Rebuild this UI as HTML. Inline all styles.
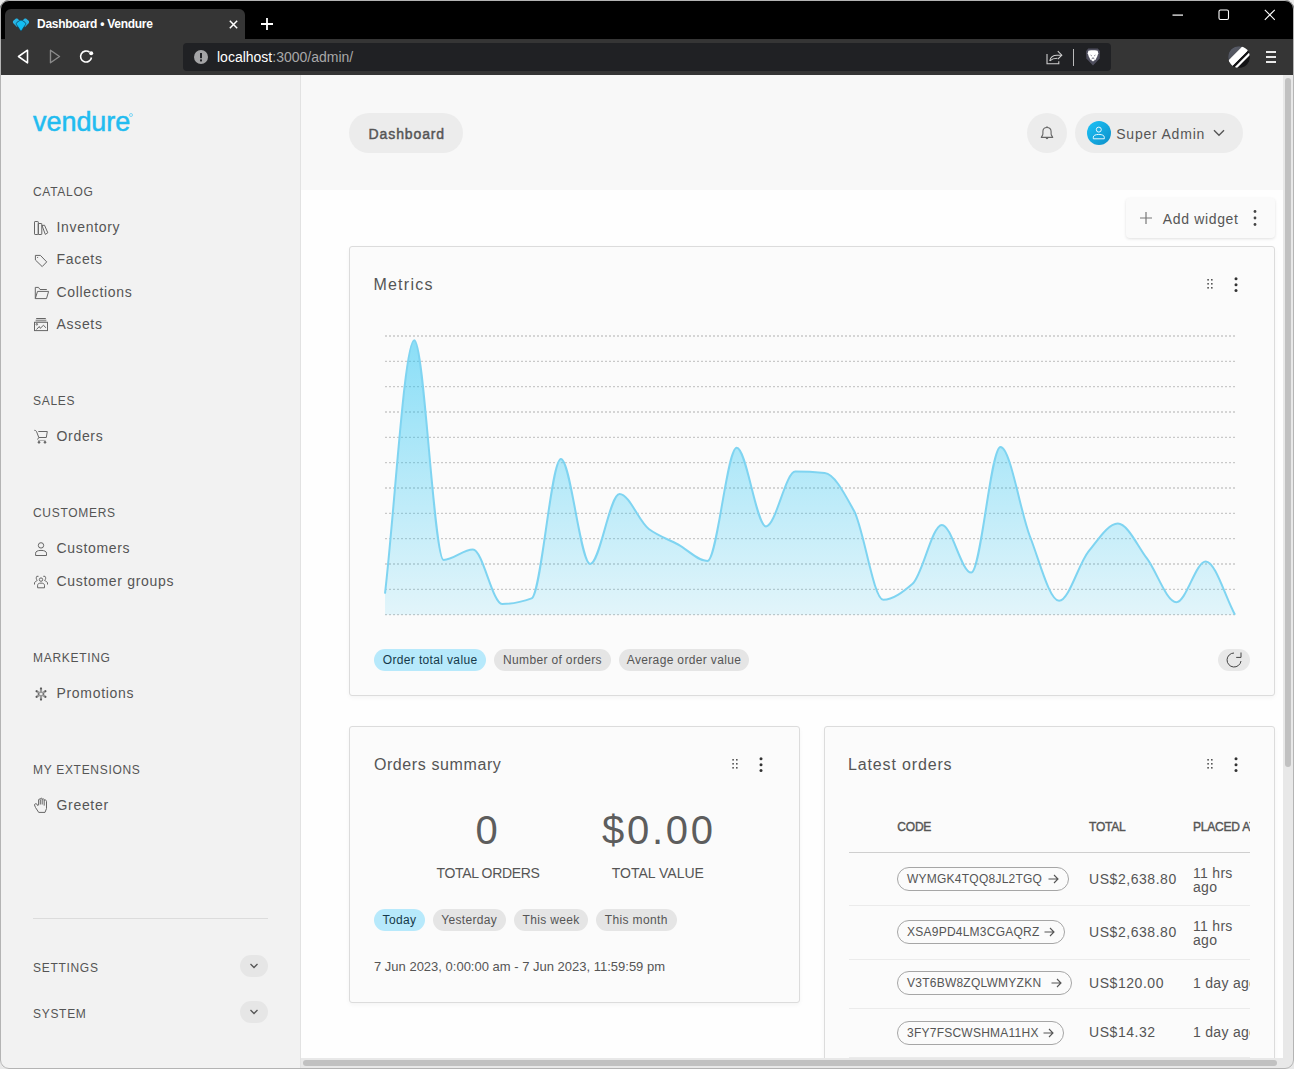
<!DOCTYPE html>
<html><head><meta charset="utf-8">
<style>
*{box-sizing:border-box;margin:0;padding:0}
html,body{width:1294px;height:1069px;overflow:hidden;background:#e9e9e9;font-family:"Liberation Sans",sans-serif}
.abs{position:absolute}
.t{position:absolute;white-space:nowrap}
#win{position:absolute;left:0;top:0;width:1294px;height:1069px;border-radius:9px;overflow:hidden;background:#fefefe}
#frame{position:absolute;left:0;top:0;width:1294px;height:1069px;border-radius:9px;border:1px solid #b4b4b4;pointer-events:none}
.sec{position:absolute;left:33px;font-size:12px;letter-spacing:0.7px;color:#555;white-space:nowrap}
.item{position:absolute;left:56.5px;font-size:14px;letter-spacing:0.68px;color:#555;white-space:nowrap}
.ico{position:absolute;left:33px}
.card{position:absolute;background:#fbfbfb;border:1px solid #dcdcdc;border-radius:3px}
.title{position:absolute;font-size:16px;letter-spacing:0.5px;color:#555;white-space:nowrap}
.chip{position:absolute;height:22px;border-radius:11px;background:#e5e5e5;font-size:12px;letter-spacing:0.35px;color:#555;line-height:22px;text-align:center;white-space:nowrap}
.pill{position:absolute;left:48px;height:24px;border:1px solid #a6a6a6;border-radius:12px;font-size:12px;letter-spacing:0.24px;color:#555;line-height:22px;padding-left:9px;white-space:nowrap}
.num{position:absolute;font-size:14px;letter-spacing:0.3px;color:#555;white-space:nowrap}
.th{position:absolute;font-size:12px;letter-spacing:-0.2px;color:#555;-webkit-text-stroke:0.4px #555;white-space:nowrap}
</style></head><body>
<div id="win">
<!-- browser chrome -->
<div class="abs" style="left:0;top:0;width:1294px;height:39px;background:#000"></div>
<div class="abs" style="left:5px;top:9px;width:240px;height:30px;background:#353535;border-radius:6px 6px 0 0"></div>
<svg class="abs" style="left:12px;top:17.5px" width="18" height="14" viewBox="0 0 18 14">
  <path d="M1.3,5.2 C0.6,4.4 0.8,3.2 1.6,2.5 L3.4,1 C4.1,0.4 5.2,0.4 5.9,1 L8,3 L5.2,9.2 Z" fill="#29b4e4"/>
  <path d="M16.7,5.2 C17.4,4.4 17.2,3.2 16.4,2.5 L14.6,1 C13.9,0.4 12.8,0.4 12.1,1 L10,3 L12.8,9.2 Z" fill="#29b4e4"/>
  <path d="M4.6,6.8 C4,6 4.2,5 5,4.3 L7.6,2.6 C8.4,2 9.6,2 10.4,2.6 L13,4.3 C13.8,5 14,6 13.4,6.8 L9.6,12.6 C9.3,13.1 8.7,13.1 8.4,12.6 Z" fill="#12bdf2" stroke="#0f4660" stroke-width="0.8"/>
</svg>
<div class="t" style="left:37px;top:16.5px;font-size:12px;letter-spacing:-0.28px;font-weight:bold;color:#fff">Dashboard • Vendure</div>
<svg class="abs" style="left:228.5px;top:19.5px" width="9" height="9" viewBox="0 0 9 9"><path d="M0.8,0.8 L8.2,8.2 M8.2,0.8 L0.8,8.2" stroke="#fff" stroke-width="1.5"/></svg>
<svg class="abs" style="left:260px;top:17px" width="14" height="14" viewBox="0 0 14 14"><path d="M7,1 V13 M1,7 H13" stroke="#fff" stroke-width="1.8"/></svg>
<svg class="abs" style="left:1172px;top:14px" width="12" height="3"><rect x="0.5" y="0.5" width="10.5" height="1.2" fill="#fff"/></svg>
<svg class="abs" style="left:1218px;top:9px" width="12" height="12"><rect x="1" y="1" width="9.5" height="9.5" rx="1.5" fill="none" stroke="#fff" stroke-width="1.1"/></svg>
<svg class="abs" style="left:1264px;top:9px" width="12" height="12"><path d="M0.8,0.8 L10.8,10.8 M10.8,0.8 L0.8,10.8" stroke="#fff" stroke-width="1.1"/></svg>
<div class="abs" style="left:0;top:39px;width:1294px;height:36px;background:#353535"></div>
<svg class="abs" style="left:17px;top:49px" width="12" height="15" viewBox="0 0 12 15"><path d="M10.5,1.2 L1.5,7.5 L10.5,13.8 Z" fill="none" stroke="#fff" stroke-width="1.6" stroke-linejoin="round"/></svg>
<svg class="abs" style="left:49px;top:49px" width="12" height="15" viewBox="0 0 12 15"><path d="M1.5,1.2 L10.5,7.5 L1.5,13.8 Z" fill="none" stroke="#8a8a8a" stroke-width="1.4" stroke-linejoin="round"/></svg>
<svg class="abs" style="left:79px;top:49px" width="16" height="16" viewBox="0 0 16 16"><path d="M12.5,8.5 A5.5,5.5 0 1 1 10.5,3.2" fill="none" stroke="#fff" stroke-width="1.6"/><circle cx="12.2" cy="4.2" r="2" fill="#fff"/></svg>
<div class="abs" style="left:183px;top:43px;width:928px;height:28px;background:#202124;border-radius:4px"></div>
<svg class="abs" style="left:194px;top:50px" width="14" height="14" viewBox="0 0 14 14"><circle cx="7" cy="7" r="7" fill="#a4a4a6"/><rect x="6" y="3" width="2" height="5.2" fill="#212226"/><rect x="6" y="9.4" width="2" height="2" fill="#212226"/></svg>
<div class="t" style="left:217px;top:49px;font-size:14px;color:#fff">localhost<span style="color:#a8a8a8">:3000/admin/</span></div>
<svg class="abs" style="left:1045px;top:49px" width="20" height="17" viewBox="0 0 20 17" fill="none" stroke="#cfcfcf" stroke-width="1.1"><path d="M2,4.9 V14.8 H13.8 V12.3"/><path d="M4.8,11.8 C5.5,8.5 8,6.3 12,6.3 H16.5"/><path d="M12.8,2.2 L16.8,6.2 L12.8,10.2"/><path d="M4.8,11.8 C7,9.8 9,9.3 12.3,9.3"/></svg>
<div class="abs" style="left:1073px;top:49px;width:1px;height:17px;background:#bbb"></div>
<svg class="abs" style="left:1085px;top:48px" width="16" height="18" viewBox="0 0 16 18"><path d="M3.2,0.5 H12.8 L15,3.2 L14.6,10.5 L8,17.6 L1.4,10.5 L1,3.2 Z" fill="#4f4f5e"/><path d="M3.4,2.8 L6,2.2 H10 L12.6,2.8 L13.3,5.2 L12.2,8.5 L10.8,11.3 L8,13.5 L5.2,11.3 L3.8,8.5 L2.7,5.2 Z" fill="#fff"/><path d="M5.5,7 L7,8 M10.5,7 L9,8 M8,9 V10.5 M6.5,11 L8,10.2 L9.5,11" stroke="#8a8a95" stroke-width="0.9" fill="none"/></svg>
<svg class="abs" style="left:1227px;top:45px" width="24" height="24" viewBox="0 0 24 24"><defs><clipPath id="cc"><circle cx="12" cy="12" r="10.8"/></clipPath><linearGradient id="gg" x1="0" y1="0" x2="1" y2="1"><stop offset="0" stop-color="#6a6e7a"/><stop offset="1" stop-color="#4a4d57"/></linearGradient></defs><g clip-path="url(#cc)"><rect x="0" y="0" width="24" height="24" fill="#141416"/><g transform="rotate(45 12 12)"><rect x="-10" y="-10" width="16.8" height="44" fill="url(#gg)"/><rect x="6.8" y="-10" width="7.1" height="44" fill="#fff"/><rect x="13.9" y="-10" width="2.2" height="44" fill="#141416"/><rect x="16.1" y="-10" width="2.3" height="44" fill="#fff"/></g></g></svg>
<svg class="abs" style="left:1265px;top:49px" width="12" height="16" viewBox="0 0 12 16"><path d="M1,3 H11 M1,8 H11 M1,13 H11" stroke="#e8e8e8" stroke-width="2"/></svg>
<!-- sidebar -->
<div class="abs" style="left:0;top:75px;width:301px;height:994px;background:#f2f2f2;border-right:1px solid #e2e2e2"></div>
<div class="t" style="left:33px;top:106.5px;font-size:27px;letter-spacing:-0.05px;color:#22bcf0;-webkit-text-stroke:0.5px #22bcf0">vendure</div>
<div class="abs" style="left:129px;top:112.5px;width:4px;height:4px;border-radius:2px;border:0.8px solid #7fd6f5"></div>
<div class="sec" style="top:185px">CATALOG</div>
<div class="item" style="top:218.6px">Inventory</div>
<div class="item" style="top:251px">Facets</div>
<div class="item" style="top:283.7px">Collections</div>
<div class="item" style="top:315.5px">Assets</div>
<div class="sec" style="top:394px">SALES</div>
<div class="item" style="top:428px">Orders</div>
<div class="sec" style="top:506px">CUSTOMERS</div>
<div class="item" style="top:540px">Customers</div>
<div class="item" style="top:572.6px">Customer groups</div>
<div class="sec" style="top:651px">MARKETING</div>
<div class="item" style="top:685px">Promotions</div>
<div class="sec" style="top:763px">MY EXTENSIONS</div>
<div class="item" style="top:797px">Greeter</div>
<div class="abs" style="left:33px;top:918px;width:235px;height:1px;background:#dcdcdc"></div>
<div class="sec" style="top:960.5px">SETTINGS</div>
<div class="abs" style="left:240px;top:955px;width:28px;height:22px;border-radius:11px;background:#e6e6e6"></div>
<svg class="abs" style="left:249px;top:962px" width="10" height="8" viewBox="0 0 10 8"><path d="M1.5,2 L5,5.5 L8.5,2" fill="none" stroke="#555" stroke-width="1.3"/></svg>
<div class="sec" style="top:1006.7px">SYSTEM</div>
<div class="abs" style="left:240px;top:1001px;width:28px;height:22px;border-radius:11px;background:#e6e6e6"></div>
<svg class="abs" style="left:249px;top:1008px" width="10" height="8" viewBox="0 0 10 8"><path d="M1.5,2 L5,5.5 L8.5,2" fill="none" stroke="#555" stroke-width="1.3"/></svg>
<!-- sidebar icons -->
<svg class="abs" style="left:30px;top:216px" width="24" height="24" viewBox="0 0 24 24" fill="none" stroke="#666" stroke-width="1"><rect x="4.5" y="5.5" width="3.8" height="13" rx="0.6"/><rect x="8.3" y="7.5" width="3.5" height="11" rx="0.4"/><path d="M12,9.5 L14.5,9.2 L17.8,16.8 L15.3,18.4 Z" stroke-linejoin="round"/></svg>
<svg class="abs" style="left:30px;top:250px" width="24" height="24" viewBox="0 0 24 24" fill="none" stroke="#666" stroke-width="1"><path d="M5.4,5.4 H10.4 L16.7,11.9 L12.2,16.6 L5.4,10 Z" stroke-linejoin="round"/><circle cx="7.6" cy="7.5" r="0.6" fill="#666" stroke="none"/></svg>
<svg class="abs" style="left:30px;top:282px" width="24" height="24" viewBox="0 0 24 24" fill="none" stroke="#666" stroke-width="1"><path d="M5.3,16.6 V5.4 H8.5 L10,7.5 H16.8" stroke-linejoin="round"/><path d="M7.5,9.4 H18.6 L16.5,16.6 H5.3 Z" stroke-linejoin="round"/></svg>
<svg class="abs" style="left:30px;top:313px" width="24" height="24" viewBox="0 0 24 24" fill="none" stroke="#666" stroke-width="1"><path d="M6.2,5.5 H15.8"/><path d="M5.6,7.5 H16.4" stroke="#999" stroke-width="1.8"/><rect x="4.5" y="9.3" width="13" height="8.3"/><path d="M6.5,16.5 L9.3,13.5 L10.3,15.3 L13.5,12.2 L15.8,14.8"/><circle cx="6.8" cy="11.3" r="0.8"/></svg>
<svg class="abs" style="left:30px;top:425px" width="24" height="24" viewBox="0 0 24 24" fill="none" stroke="#666" stroke-width="1"><path d="M4.3,5.3 C5.8,5.3 6.3,6 6.7,7 L8.8,12.5 L7.5,14.5"/><path d="M8.3,6.5 H17.3 L16.3,12.5 H8.8"/><path d="M8,15.4 H15.6" stroke="#aaa"/><circle cx="9" cy="17.3" r="0.9" fill="#555"/><circle cx="15" cy="17.3" r="0.9" fill="#555"/></svg>
<svg class="abs" style="left:30px;top:537px" width="24" height="24" viewBox="0 0 24 24" fill="none" stroke="#666" stroke-width="1"><circle cx="11" cy="8.4" r="2.7"/><path d="M5.6,18.5 V16.2 C5.6,14.5 7.5,13.4 11,13.4 C14.5,13.4 16.5,14.5 16.5,16.2 V18.5 Z" stroke-linejoin="round"/></svg>
<svg class="abs" style="left:30px;top:569px" width="24" height="24" viewBox="0 0 24 24" fill="none" stroke="#666" stroke-width="1"><circle cx="11" cy="10.6" r="1.7"/><path d="M7.6,18.8 V16.3 C7.6,14.8 9,14.1 11,14.1 C13,14.1 14.5,14.8 14.5,16.3 V18.8 Z"/><path d="M8.5,7.3 H6.8 C6,8.5 6,10 7.2,11.5 C6,12.3 4.6,12.8 4.5,14 V15.5"/><path d="M13.3,7.3 H15 C16,8.5 16,10 14.6,11.5 C16,12.3 17.4,12.8 17.5,14 V15.5"/></svg>
<svg class="abs" style="left:30px;top:681px" width="24" height="24" viewBox="0 0 24 24"><g stroke="#9a9a9a" stroke-width="2.2" stroke-linecap="round"><path d="M11,7.6 V18.4"/><path d="M6.6,10.2 L15.4,15.8"/><path d="M15.4,10.2 L6.6,15.8"/></g><ellipse cx="11" cy="13" rx="1.6" ry="1.1" fill="#f2f2f2"/><g fill="#555"><circle cx="11" cy="7.6" r="1"/><circle cx="11" cy="18.4" r="1"/><circle cx="6.6" cy="10.2" r="0.9"/><circle cx="15.4" cy="10.2" r="0.9"/><circle cx="6.6" cy="15.8" r="0.9"/><circle cx="15.4" cy="15.8" r="0.9"/><circle cx="8.4" cy="13" r="0.8"/><circle cx="13.6" cy="13" r="0.8"/></g></svg>
<svg class="abs" style="left:30px;top:793px" width="24" height="24" viewBox="0 0 24 24" fill="none" stroke="#666" stroke-width="1"><path d="M8.6,12.3 V6.8 C8.6,5.8 10.3,5.8 10.3,6.8 V11.5 M10.3,6.2 C10.3,4.8 12.2,4.8 12.2,6.2 V11.5 M12.2,6.6 C12.2,5.5 14.2,5.5 14.2,6.8 V12.6 M14.2,7.5 C14.2,6.5 16.5,6.8 16.5,8.3 V15.5 L15,19.4 H8.7 L5.5,14.5 L4.5,12 C4.5,10.8 5.8,10.3 6.8,11 L7.8,12.8"/></svg>
<!-- main header -->
<div class="abs" style="left:301px;top:75px;width:982px;height:115px;background:#f8f8f8"></div>
<div class="abs" style="left:349px;top:113px;width:114px;height:40px;border-radius:20px;background:#ececec"></div>
<div class="t" style="left:368.6px;top:126px;font-size:14px;letter-spacing:0.88px;color:#555;-webkit-text-stroke:0.45px #555">Dashboard</div>
<div class="abs" style="left:1027px;top:113px;width:40px;height:40px;border-radius:20px;background:#ececec"></div>
<svg class="abs" style="left:1037px;top:123px" width="20" height="20" viewBox="0 0 20 20" fill="none" stroke="#666" stroke-width="1.1"><path d="M4.3,14.4 H15.7 C15.3,13.2 14.2,12.6 14.1,11 V8.5 C14.1,5.9 12.3,4.5 10,4.5 C7.7,4.5 5.9,5.9 5.9,8.5 V11 C5.8,12.6 4.7,13.2 4.3,14.4 Z" stroke-linejoin="round"/><path d="M10,3.3 V4.5"/><path d="M9.2,15 C9.3,15.8 10.7,15.8 10.8,15" fill="#666"/></svg>
<div class="abs" style="left:1075px;top:113px;width:168px;height:40px;border-radius:20px;background:#ececec"></div>
<div class="abs" style="left:1087px;top:121px;width:24px;height:24px;border-radius:12px;background:linear-gradient(135deg,#1cc3f8 0%,#0d8fc8 100%)"></div>
<svg class="abs" style="left:1087px;top:121px" width="24" height="24" viewBox="0 0 24 24" fill="none" stroke="#e8f8ff" stroke-width="1"><circle cx="11.8" cy="8.6" r="2.5"/><path d="M6.3,17.8 V16.2 C6.3,14.6 8.3,13.4 11.8,13.4 C15.3,13.4 17.3,14.6 17.3,16.2 V17.8 Z" stroke-linejoin="round"/></svg>
<div class="t" style="left:1116.2px;top:125.5px;font-size:14px;letter-spacing:0.8px;color:#555">Super Admin</div>
<svg class="abs" style="left:1212px;top:128px" width="14" height="10" viewBox="0 0 14 10"><path d="M2,2.2 L7,7.2 L12,2.2" fill="none" stroke="#555" stroke-width="1.4"/></svg>
<!-- add widget -->
<div class="abs" style="left:1126px;top:198px;width:149px;height:40px;border-radius:4px;background:#fafafa;box-shadow:0 1px 3px rgba(0,0,0,0.12)"></div>
<svg class="abs" style="left:1139px;top:211px" width="14" height="14" viewBox="0 0 14 14"><path d="M7,1 V13 M1,7 H13" stroke="#777" stroke-width="1.2"/></svg>
<div class="t" style="left:1162.8px;top:210.8px;font-size:14px;letter-spacing:0.65px;color:#555">Add widget</div>
<svg class="abs" style="left:1252px;top:208px" width="6" height="20"><circle cx="3" cy="3.5" r="1.4" fill="#444"/><circle cx="3" cy="10" r="1.4" fill="#444"/><circle cx="3" cy="16.5" r="1.4" fill="#444"/></svg>
<!-- metrics card -->
<div class="card" style="left:349px;top:246px;width:926px;height:450px;box-shadow:0 2px 4px rgba(0,0,0,0.04)"></div>
<div class="title" style="left:373.4px;top:276.3px;letter-spacing:1.25px">Metrics</div>
<svg class="abs" style="left:1205px;top:277px" width="10" height="14"><g fill="#555"><rect x="2.3" y="2" width="1.6" height="1.6"/><rect x="6" y="2" width="1.6" height="1.6"/><rect x="2.3" y="6" width="1.6" height="1.6"/><rect x="6" y="6" width="1.6" height="1.6"/><rect x="2.3" y="10" width="1.6" height="1.6"/><rect x="6" y="10" width="1.6" height="1.6"/></g></svg>
<svg class="abs" style="left:1233px;top:276px" width="6" height="18"><circle cx="3" cy="2.8" r="1.5" fill="#333"/><circle cx="3" cy="8.7" r="1.5" fill="#333"/><circle cx="3" cy="14.6" r="1.5" fill="#333"/></svg>
<svg class="abs" style="left:0;top:0" width="1294" height="1069" viewBox="0 0 1294 1069">
<defs><linearGradient id="g" x1="0" y1="336" x2="0" y2="615" gradientUnits="userSpaceOnUse"><stop offset="0" stop-color="#17c1f3" stop-opacity="0.5"/><stop offset="1" stop-color="#17c1f3" stop-opacity="0.11"/></linearGradient></defs>
<g stroke="#c9c9c9" stroke-width="1.3" stroke-dasharray="2 2"><line x1="385" y1="336.00" x2="1236" y2="336.00"/><line x1="385" y1="361.34" x2="1236" y2="361.34"/><line x1="385" y1="386.67" x2="1236" y2="386.67"/><line x1="385" y1="412.01" x2="1236" y2="412.01"/><line x1="385" y1="437.34" x2="1236" y2="437.34"/><line x1="385" y1="462.68" x2="1236" y2="462.68"/><line x1="385" y1="488.02" x2="1236" y2="488.02"/><line x1="385" y1="513.35" x2="1236" y2="513.35"/><line x1="385" y1="538.69" x2="1236" y2="538.69"/><line x1="385" y1="564.02" x2="1236" y2="564.02"/><line x1="385" y1="589.36" x2="1236" y2="589.36"/><line x1="385" y1="614.70" x2="1236" y2="614.70"/></g>
<path d="M385.0,593.6 C394.8,509.1 404.5,340.2 414.3,340.2 C424.1,340.2 433.9,560.0 443.6,560.0 C453.4,560.0 463.2,549.5 472.9,549.5 C482.7,549.5 492.5,604.0 502.2,604.0 C512.0,604.0 521.8,602.0 531.6,598.4 C541.3,594.8 551.1,459.0 560.9,459.0 C570.6,459.0 580.4,564.0 590.2,564.0 C599.9,564.0 609.7,494.0 619.5,494.0 C629.3,494.0 639.0,521.8 648.8,529.0 C658.6,536.2 668.3,539.2 678.1,544.5 C687.9,549.8 697.6,561.0 707.4,561.0 C717.2,561.0 727.0,447.8 736.7,447.8 C746.5,447.8 756.3,526.4 766.0,526.4 C775.8,526.4 785.6,471.6 795.3,471.6 C805.1,471.6 814.9,472.1 824.7,473.0 C834.4,473.9 844.2,493.1 854.0,510.8 C863.7,528.5 873.5,599.8 883.3,599.8 C893.0,599.8 902.8,592.2 912.6,583.8 C922.4,575.4 932.1,524.9 941.9,524.9 C951.7,524.9 961.4,572.6 971.2,572.6 C981.0,572.6 990.7,446.9 1000.5,446.9 C1010.3,446.9 1020.1,511.0 1029.8,536.0 C1039.6,561.0 1049.4,600.8 1059.1,600.8 C1068.9,600.8 1078.7,563.5 1088.4,551.6 C1098.2,539.7 1108.0,523.6 1117.8,523.6 C1127.5,523.6 1137.3,545.7 1147.1,558.7 C1156.8,571.7 1166.6,602.2 1176.4,602.2 C1186.1,602.2 1195.9,561.5 1205.7,561.5 C1215.5,561.5 1225.2,597.0 1235.0,614.7 L1235,614.7 L385,614.7 Z" fill="url(#g)"/>
<path d="M385.0,593.6 C394.8,509.1 404.5,340.2 414.3,340.2 C424.1,340.2 433.9,560.0 443.6,560.0 C453.4,560.0 463.2,549.5 472.9,549.5 C482.7,549.5 492.5,604.0 502.2,604.0 C512.0,604.0 521.8,602.0 531.6,598.4 C541.3,594.8 551.1,459.0 560.9,459.0 C570.6,459.0 580.4,564.0 590.2,564.0 C599.9,564.0 609.7,494.0 619.5,494.0 C629.3,494.0 639.0,521.8 648.8,529.0 C658.6,536.2 668.3,539.2 678.1,544.5 C687.9,549.8 697.6,561.0 707.4,561.0 C717.2,561.0 727.0,447.8 736.7,447.8 C746.5,447.8 756.3,526.4 766.0,526.4 C775.8,526.4 785.6,471.6 795.3,471.6 C805.1,471.6 814.9,472.1 824.7,473.0 C834.4,473.9 844.2,493.1 854.0,510.8 C863.7,528.5 873.5,599.8 883.3,599.8 C893.0,599.8 902.8,592.2 912.6,583.8 C922.4,575.4 932.1,524.9 941.9,524.9 C951.7,524.9 961.4,572.6 971.2,572.6 C981.0,572.6 990.7,446.9 1000.5,446.9 C1010.3,446.9 1020.1,511.0 1029.8,536.0 C1039.6,561.0 1049.4,600.8 1059.1,600.8 C1068.9,600.8 1078.7,563.5 1088.4,551.6 C1098.2,539.7 1108.0,523.6 1117.8,523.6 C1127.5,523.6 1137.3,545.7 1147.1,558.7 C1156.8,571.7 1166.6,602.2 1176.4,602.2 C1186.1,602.2 1195.9,561.5 1205.7,561.5 C1215.5,561.5 1225.2,597.0 1235.0,614.7" fill="none" stroke="#7fd4f1" stroke-width="2"/>
</svg>
<div class="chip" style="left:374.3px;top:649px;width:111.7px;background:#b7e9fb;color:#15394a">Order total value</div>
<div class="chip" style="left:494px;top:649px;width:117px">Number of orders</div>
<div class="chip" style="left:619px;top:649px;width:130px">Average order value</div>
<div class="abs" style="left:1218px;top:649px;width:32px;height:22px;border-radius:11px;background:#e8e8e8"></div>
<svg class="abs" style="left:1225px;top:651px" width="18" height="18" viewBox="0 0 18 18" fill="none" stroke="#444" stroke-width="1"><path d="M9,2 A7,7 0 1 0 16,10"/><path d="M11.2,6.4 H16 V1.5"/></svg>
<!-- orders summary -->
<div class="card" style="left:349px;top:726px;width:451px;height:277px;box-shadow:0 2px 4px rgba(0,0,0,0.04)"></div>
<div class="title" style="left:373.9px;top:756px;letter-spacing:0.6px">Orders summary</div>
<svg class="abs" style="left:730px;top:757px" width="10" height="14"><g fill="#555"><rect x="2.3" y="2" width="1.6" height="1.6"/><rect x="6" y="2" width="1.6" height="1.6"/><rect x="2.3" y="6" width="1.6" height="1.6"/><rect x="6" y="6" width="1.6" height="1.6"/><rect x="2.3" y="10" width="1.6" height="1.6"/><rect x="6" y="10" width="1.6" height="1.6"/></g></svg>
<svg class="abs" style="left:758px;top:756px" width="6" height="18"><circle cx="3" cy="2.8" r="1.5" fill="#333"/><circle cx="3" cy="8.7" r="1.5" fill="#333"/><circle cx="3" cy="14.6" r="1.5" fill="#333"/></svg>
<div class="t" style="left:475.5px;top:808px;font-size:40px;color:#5d5d5d">0</div>
<div class="t" style="left:602px;top:808px;font-size:40px;letter-spacing:2.7px;color:#5d5d5d">$0.00</div>
<div class="t" style="left:436.5px;top:865px;font-size:14px;letter-spacing:-0.35px;color:#555">TOTAL ORDERS</div>
<div class="t" style="left:611.8px;top:865px;font-size:14px;color:#555">TOTAL VALUE</div>
<div class="chip" style="left:374px;top:909px;width:51px;background:#b7e9fb;color:#15394a">Today</div>
<div class="chip" style="left:432.7px;top:909px;width:73px">Yesterday</div>
<div class="chip" style="left:514.3px;top:909px;width:73.5px">This week</div>
<div class="chip" style="left:596px;top:909px;width:80.5px">This month</div>
<div class="t" style="left:374px;top:959px;font-size:13px;color:#555">7 Jun 2023, 0:00:00 am - 7 Jun 2023, 11:59:59 pm</div>
<!-- latest orders -->
<div class="card" style="left:824px;top:726px;width:451px;height:400px;box-shadow:0 2px 4px rgba(0,0,0,0.04)"></div>
<div class="title" style="left:848px;top:756px;letter-spacing:0.85px">Latest orders</div>
<svg class="abs" style="left:1205px;top:757px" width="10" height="14"><g fill="#555"><rect x="2.3" y="2" width="1.6" height="1.6"/><rect x="6" y="2" width="1.6" height="1.6"/><rect x="2.3" y="6" width="1.6" height="1.6"/><rect x="6" y="6" width="1.6" height="1.6"/><rect x="2.3" y="10" width="1.6" height="1.6"/><rect x="6" y="10" width="1.6" height="1.6"/></g></svg>
<svg class="abs" style="left:1233px;top:756px" width="6" height="18"><circle cx="3" cy="2.8" r="1.5" fill="#333"/><circle cx="3" cy="8.7" r="1.5" fill="#333"/><circle cx="3" cy="14.6" r="1.5" fill="#333"/></svg>
<div class="abs" style="left:849px;top:800px;width:401px;height:260px;overflow:hidden">
  <div class="th" style="left:48.3px;top:20px">CODE</div>
  <div class="th" style="left:240px;top:20px">TOTAL</div>
  <div class="th" style="left:344px;top:20px">PLACED AT</div>
  <div class="abs" style="left:0;top:52px;width:401px;height:1px;background:#cfcfcf"></div>
  <div class="pill" style="top:67.3px;width:172.2px">WYMGK4TQQ8JL2TGQ<svg style="position:absolute;right:9px;top:6px" width="11" height="10" viewBox="0 0 11 10" fill="none" stroke="#555" stroke-width="1.1"><path d="M0.5,5 H10 M6,1 L10,5 L6,9"/></svg></div>
  <div class="num" style="left:240px;top:71px;letter-spacing:0.55px">US$2,638.80</div>
  <div class="num" style="left:344px;top:66px;line-height:14px;white-space:normal;width:60px">11 hrs ago</div>
  <div class="abs" style="left:0;top:105px;width:401px;height:1px;background:#ebebeb"></div>
  <div class="pill" style="top:120.2px;width:168.2px">XSA9PD4LM3CGAQRZ<svg style="position:absolute;right:9px;top:6px" width="11" height="10" viewBox="0 0 11 10" fill="none" stroke="#555" stroke-width="1.1"><path d="M0.5,5 H10 M6,1 L10,5 L6,9"/></svg></div>
  <div class="num" style="left:240px;top:124.4px;letter-spacing:0.55px">US$2,638.80</div>
  <div class="num" style="left:344px;top:119px;line-height:14px;white-space:normal;width:60px">11 hrs ago</div>
  <div class="abs" style="left:0;top:158.5px;width:401px;height:1px;background:#ebebeb"></div>
  <div class="pill" style="top:171px;width:174.6px">V3T6BW8ZQLWMYZKN<svg style="position:absolute;right:9px;top:6px" width="11" height="10" viewBox="0 0 11 10" fill="none" stroke="#555" stroke-width="1.1"><path d="M0.5,5 H10 M6,1 L10,5 L6,9"/></svg></div>
  <div class="num" style="left:240px;top:175.4px;letter-spacing:0.55px">US$120.00</div>
  <div class="num" style="left:344px;top:175.4px">1 day ago</div>
  <div class="abs" style="left:0;top:207.5px;width:401px;height:1px;background:#ebebeb"></div>
  <div class="pill" style="top:220.6px;width:166.6px">3FY7FSCWSHMA11HX<svg style="position:absolute;right:9px;top:6px" width="11" height="10" viewBox="0 0 11 10" fill="none" stroke="#555" stroke-width="1.1"><path d="M0.5,5 H10 M6,1 L10,5 L6,9"/></svg></div>
  <div class="num" style="left:240px;top:224.2px;letter-spacing:0.55px">US$14.32</div>
  <div class="num" style="left:344px;top:224.2px">1 day ago</div>
  <div class="abs" style="left:0;top:256.5px;width:401px;height:1px;background:#ebebeb"></div>
</div>
<!-- scrollbars -->
<div class="abs" style="left:1283px;top:75px;width:10px;height:994px;background:#e8e8e8"></div>
<div class="abs" style="left:1285px;top:78px;width:6px;height:689px;border-radius:3px;background:#c1c1c1"></div>
<div class="abs" style="left:301px;top:1058px;width:982px;height:10px;background:#e8e8e8"></div>
<div class="abs" style="left:303px;top:1060px;width:974px;height:6px;border-radius:3px;background:#c1c1c1"></div>
<div class="abs" style="left:1283px;top:1058px;width:10px;height:10px;background:#e8e8e8"></div>
</div>
<div id="frame"></div>
</body></html>
